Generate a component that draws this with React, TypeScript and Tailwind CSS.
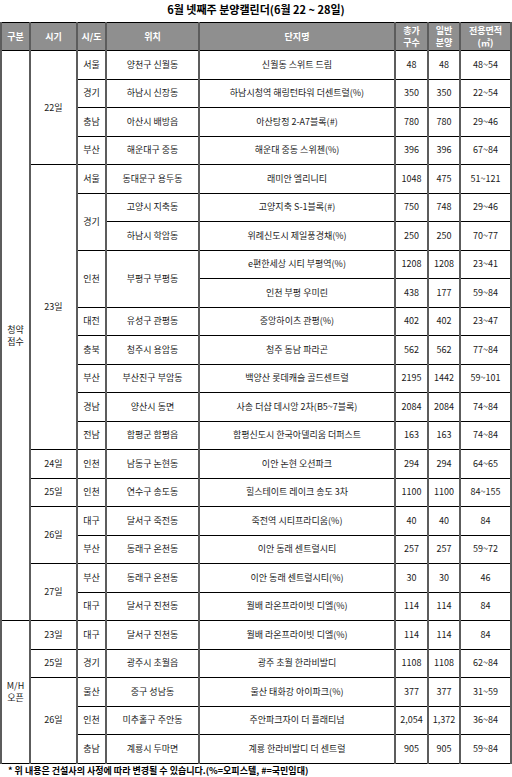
type Row = {
  gubun?: { text: string[]; span: number };
  date?: { text: string; span: number };
  sido?: { text: string; span: number };
  loc?: { text: string; span: number };
  name: string;
  total: string;
  general: string;
  area: string;
};

const rows: Row[] = [
  { gubun: { text: ["청약", "접수"], span: 20 }, date: { text: "22일", span: 4 }, sido: { text: "서울", span: 1 }, loc: { text: "양천구 신월동", span: 1 }, name: "신월동 스위트 드림", total: "48", general: "48", area: "48~54" },
  { sido: { text: "경기", span: 1 }, loc: { text: "하남시 신장동", span: 1 }, name: "하남시청역 해링턴타워 더센트럴(%)", total: "350", general: "350", area: "22~54" },
  { sido: { text: "충남", span: 1 }, loc: { text: "아산시 배방읍", span: 1 }, name: "아산탕정 2-A7블록(#)", total: "780", general: "780", area: "29~46" },
  { sido: { text: "부산", span: 1 }, loc: { text: "해운대구 중동", span: 1 }, name: "해운대 중동 스위첸(%)", total: "396", general: "396", area: "67~84" },
  { date: { text: "23일", span: 10 }, sido: { text: "서울", span: 1 }, loc: { text: "동대문구 용두동", span: 1 }, name: "래미안 엘리니티", total: "1048", general: "475", area: "51~121" },
  { sido: { text: "경기", span: 2 }, loc: { text: "고양시 지축동", span: 1 }, name: "고양지축 S-1블록(#)", total: "750", general: "748", area: "29~46" },
  { loc: { text: "하남시 학암동", span: 1 }, name: "위례신도시 제일풍경채(%)", total: "250", general: "250", area: "70~77" },
  { sido: { text: "인천", span: 2 }, loc: { text: "부평구 부평동", span: 2 }, name: "e편한세상 시티 부평역(%)", total: "1208", general: "1208", area: "23~41" },
  { name: "인천 부평 우미린", total: "438", general: "177", area: "59~84" },
  { sido: { text: "대전", span: 1 }, loc: { text: "유성구 관평동", span: 1 }, name: "중앙하이츠 관평(%)", total: "402", general: "402", area: "23~47" },
  { sido: { text: "충북", span: 1 }, loc: { text: "청주시 용암동", span: 1 }, name: "청주 동남 파라곤", total: "562", general: "562", area: "77~84" },
  { sido: { text: "부산", span: 1 }, loc: { text: "부산진구 부암동", span: 1 }, name: "백양산 롯데캐슬 골드센트럴", total: "2195", general: "1442", area: "59~101" },
  { sido: { text: "경남", span: 1 }, loc: { text: "양산시 동면", span: 1 }, name: "사송 더샵 데시앙 2차(B5~7블록)", total: "2084", general: "2084", area: "74~84" },
  { sido: { text: "전남", span: 1 }, loc: { text: "함평군 함평읍", span: 1 }, name: "함평신도시 한국아델리움 더퍼스트", total: "163", general: "163", area: "74~84" },
  { date: { text: "24일", span: 1 }, sido: { text: "인천", span: 1 }, loc: { text: "남동구 논현동", span: 1 }, name: "이안 논현 오션파크", total: "294", general: "294", area: "64~65" },
  { date: { text: "25일", span: 1 }, sido: { text: "인천", span: 1 }, loc: { text: "연수구 송도동", span: 1 }, name: "힐스테이트 레이크 송도 3차", total: "1100", general: "1100", area: "84~155" },
  { date: { text: "26일", span: 2 }, sido: { text: "대구", span: 1 }, loc: { text: "달서구 죽전동", span: 1 }, name: "죽전역 시티프라디움(%)", total: "40", general: "40", area: "84" },
  { sido: { text: "부산", span: 1 }, loc: { text: "동래구 온천동", span: 1 }, name: "이안 동래 센트럴시티", total: "257", general: "257", area: "59~72" },
  { date: { text: "27일", span: 2 }, sido: { text: "부산", span: 1 }, loc: { text: "동래구 온천동", span: 1 }, name: "이안 동래 센트럴시티(%)", total: "30", general: "30", area: "46" },
  { sido: { text: "대구", span: 1 }, loc: { text: "달서구 진천동", span: 1 }, name: "월배 라온프라이빗 디엘(%)", total: "114", general: "114", area: "84" },
  { gubun: { text: ["M/H", "오픈"], span: 5 }, date: { text: "23일", span: 1 }, sido: { text: "대구", span: 1 }, loc: { text: "달서구 진천동", span: 1 }, name: "월배 라온프라이빗 디엘(%)", total: "114", general: "114", area: "84" },
  { date: { text: "25일", span: 1 }, sido: { text: "경기", span: 1 }, loc: { text: "광주시 초월읍", span: 1 }, name: "광주 초월 한라비발디", total: "1108", general: "1108", area: "62~84" },
  { date: { text: "26일", span: 3 }, sido: { text: "울산", span: 1 }, loc: { text: "중구 성남동", span: 1 }, name: "울산 태화강 아이파크(%)", total: "377", general: "377", area: "31~59" },
  { sido: { text: "인천", span: 1 }, loc: { text: "미추홀구 주안동", span: 1 }, name: "주안파크자이 더 플래티넘", total: "2,054", general: "1,372", area: "36~84" },
  { sido: { text: "충남", span: 1 }, loc: { text: "계룡시 두마면", span: 1 }, name: "계룡 한라비발디 더 센트럴", total: "905", general: "905", area: "59~84" },
];

const cell = "border-x-2 border-x-[#5c5c5c] border-y border-y-black text-center align-middle p-0";
const th = "border-x-2 border-x-[#5c5c5c] border-y border-y-black text-center align-middle p-0 font-bold text-white leading-[12px]";

export default function App() {
  return (
    <div className="w-[512px] bg-white font-['Noto_Sans_CJK_KR','Noto_Sans',sans-serif] text-[#1a1a1a]">
      <div className="h-[22px] flex items-center justify-center pb-[4px] text-[11px] font-bold text-black leading-[14px]">
        6월 넷째주 분양캘린더(6월 22 ~ 28일)
      </div>
      <table className="w-[510px] mx-auto table-fixed border-collapse text-[9px] leading-[12px]">
        <colgroup>
          <col className="w-[29px]" />
          <col className="w-[47px]" />
          <col className="w-[29px]" />
          <col className="w-[93px]" />
          <col className="w-[196px]" />
          <col className="w-[33px]" />
          <col className="w-[32px]" />
          <col className="w-[51px]" />
        </colgroup>
        <thead>
          <tr className="h-[28px] bg-[#8f8f8f]">
            <th className={th}>구분</th>
            <th className={th}>시기</th>
            <th className={th}>시/도</th>
            <th className={th}>위치</th>
            <th className={th}>단지명</th>
            <th className={th}>총가<br />구수</th>
            <th className={th}>일반<br />분양</th>
            <th className={th}>전용면적<br />(㎡)</th>
          </tr>
        </thead>
        <tbody>
          {rows.map((r, i) => (
            <tr key={i} className="h-[28.5px]">
              {r.gubun && (
                <td rowSpan={r.gubun.span} className={cell}>
                  {r.gubun.text[0]}
                  <br />
                  {r.gubun.text[1]}
                </td>
              )}
              {r.date && (
                <td rowSpan={r.date.span} className={cell}>
                  {r.date.text}
                </td>
              )}
              {r.sido && (
                <td rowSpan={r.sido.span} className={cell}>
                  {r.sido.text}
                </td>
              )}
              {r.loc && (
                <td rowSpan={r.loc.span} className={cell}>
                  {r.loc.text}
                </td>
              )}
              <td className={cell}>{r.name}</td>
              <td className={cell}>{r.total}</td>
              <td className={cell}>{r.general}</td>
              <td className={cell}>{r.area}</td>
            </tr>
          ))}
        </tbody>
      </table>
      <div className="pl-[8px] pt-[1px] text-[9px] font-bold leading-[12px] text-black">
        * 위 내용은 건설사의 사정에 따라 변경될 수 있습니다.(%=오피스텔, #=국민임대)
      </div>
    </div>
  );
}
